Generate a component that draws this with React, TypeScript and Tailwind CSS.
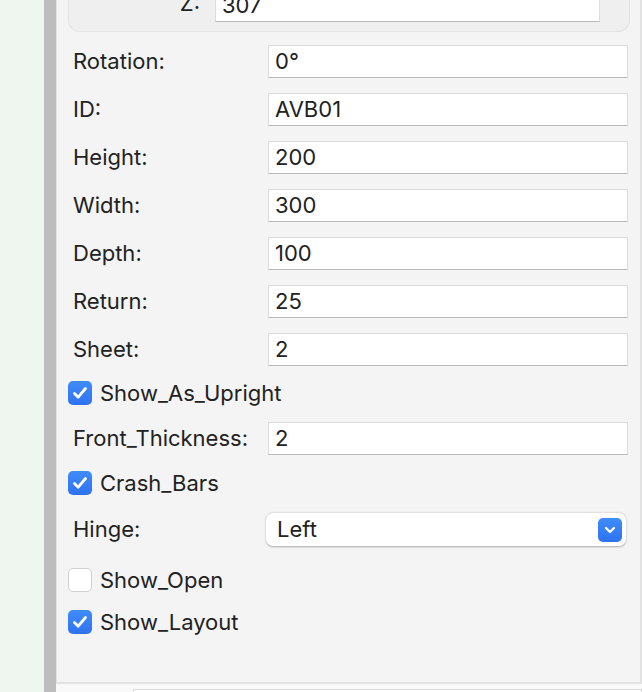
import { ChevronDown } from 'lucide-react'

const fields = [
  { label: 'Rotation:', value: '0°' },
  { label: 'ID:', value: 'AVB01' },
  { label: 'Height:', value: '200' },
  { label: 'Width:', value: '300' },
  { label: 'Depth:', value: '100' },
  { label: 'Return:', value: '25' },
  { label: 'Sheet:', value: '2' },
]

function TextField({ value, className = '' }: { value: string; className?: string }) {
  return (
    <div
      className={`h-[33px] bg-white border border-[#dcdcdc] border-b-[#b9b9b9] flex items-center pl-[6px] text-[22px] text-[#222] ${className}`}
    >
      {value}
    </div>
  )
}

function FieldRow({ label, value, className = '' }: { label: string; value: string; className?: string }) {
  return (
    <div className={`flex items-center ${className}`}>
      <div className="w-[211px] shrink-0 pl-[16px] text-[22px] text-[#222]">{label}</div>
      <TextField value={value} className="w-[360px]" />
    </div>
  )
}

function Check({ label, checked, className = '' }: { label: string; checked: boolean; className?: string }) {
  return (
    <div className={`flex items-center gap-[8px] pl-[11px] h-[24px] ${className}`}>
      {checked ? (
        <div className="w-[24px] h-[24px] rounded-[5px] bg-gradient-to-b from-[#3f8cfb] to-[#2f72f0] flex items-center justify-center">
          <svg width="18" height="18" viewBox="0 0 18 18" fill="none">
            <path d="M3.5 9.5 L7.2 13.2 L14.5 4.5" stroke="white" strokeWidth="2.8" strokeLinecap="round" strokeLinejoin="round" />
          </svg>
        </div>
      ) : (
        <div className="w-[24px] h-[24px] rounded-[5px] bg-white border border-[#d0d0d0]" />
      )}
      <span className="text-[22px] text-[#222]">{label}</span>
    </div>
  )
}

export default function App() {
  return (
    <div className="flex w-[642px] h-[692px] overflow-hidden bg-white" style={{ fontFamily: 'Inter, "Noto Sans", sans-serif' }}>
      <div className="w-[44px] shrink-0 bg-[#eff5ef]" />
      <div className="w-[12px] shrink-0 bg-[#bdbdbd]" />
      <div className="flex-1 flex flex-col">
        <div className="h-[684px] shrink-0 bg-[#f4f4f4] border-l border-r-2 border-b-2 border-[#e2e2e2] flex flex-col">
          {/* group box, its top is scrolled out of view */}
          <div className="ml-[11px] mr-[10px] -mt-[20px] h-[52px] bg-[#efefef] border border-t-0 border-[#e3e3e3] rounded-b-[12px] flex items-end pb-[9px]">
            <div className="w-[146px] text-right text-[22px] text-[#222] pr-[15px] pb-[2px]">Z:</div>
            <TextField value="307" className="w-[385px]" />
          </div>

          {fields.map((f, i) => (
            <FieldRow key={f.label} label={f.label} value={f.value} className={i === 0 ? 'mt-[13px]' : 'mt-[15px]'} />
          ))}

          <Check label="Show_As_Upright" checked className="mt-[15px]" />
          <FieldRow label="Front_Thickness:" value="2" className="mt-[17px]" />
          <Check label="Crash_Bars" checked className="mt-[16px]" />

          <div className="flex items-center mt-[18px]">
            <div className="w-[209px] shrink-0 pl-[16px] text-[22px] text-[#222]">Hinge:</div>
            <div className="w-[360px] h-[33px] bg-white rounded-[7px] shadow-[0_0.5px_2px_rgba(0,0,0,0.3)] flex items-center justify-between pl-[11px] pr-[4px] text-[22px] text-[#222]">
              <span>Left</span>
              <div className="w-[24px] h-[24px] rounded-[5px] bg-gradient-to-b from-[#3f8cfb] to-[#2f72f0] flex items-center justify-center">
                <ChevronDown size={16} color="white" strokeWidth={3.5} />
              </div>
            </div>
          </div>

          <Check label="Show_Open" checked={false} className="mt-[22px]" />
          <Check label="Show_Layout" checked className="mt-[18px]" />
        </div>
        <div className="flex-1 overflow-hidden bg-[#f9f9f9] pl-[77px] pt-[5px]">
          <div className="h-[20px] bg-white border border-[#dcdcdc]" />
        </div>
      </div>
    </div>
  )
}
